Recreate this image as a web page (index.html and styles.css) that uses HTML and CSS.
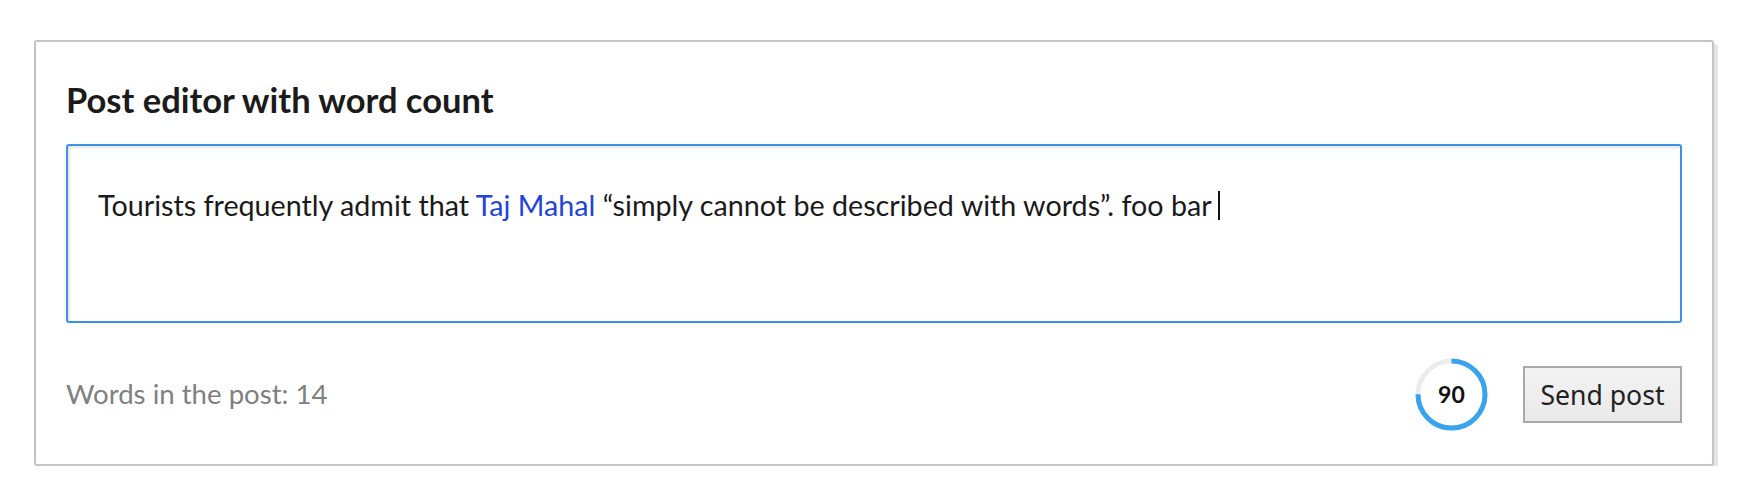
FILE: index.html
```html
<!DOCTYPE html>
<html lang="en">
<head>
<meta charset="utf-8">
<title>Post editor with word count</title>
<link rel="stylesheet" href="styles.css">
</head>
<body>
<div class="card">
  <h3 class="title">Post editor with word count</h3>
  <div class="editor">
    <p class="editor-text">Tourists frequently admit that <a class="link" href="#">Taj Mahal</a> “simply cannot be described with words”. foo bar <span class="caret"></span></p>
  </div>
  <div class="footer">
    <div class="words">Words in the post: 14</div>
    <div class="actions">
      <div class="chars">
        <svg class="ring" width="73" height="73" viewBox="0 0 73 73">
          <circle cx="36.5" cy="36.5" r="33.5" fill="none" stroke="#ececec" stroke-width="5"/>
          <circle cx="36.5" cy="36.5" r="33.5" fill="none" stroke="#38a3ef" stroke-width="5" stroke-dasharray="157.87 210.49" transform="rotate(-90 36.5 36.5)"/>
        </svg>
        <span class="chars-num">90</span>
      </div>
      <button class="send" type="button">Send post</button>
    </div>
  </div>
</div>
</body>
</html>
```

FILE: styles.css
```css
html, body {
  margin: 0;
  padding: 0;
  background: #ffffff;
}

.card {
  box-sizing: border-box;
  width: 1680px;
  margin: 40px 0 0 34px;
  padding: 37.5px 30px 33px 30px;
  border: 2px solid #c4c4c4;
  border-radius: 3px;
  box-shadow: 4px 4px 0 #e4e4e4;
  background: #fff;
}

.title {
  margin: 0 0 24.5px 0;
  font-family: Lato, "Liberation Sans", sans-serif;
  font-weight: 700;
  font-size: 34.5px;
  line-height: 40px;
  color: #1b1b1b;
}

.editor {
  box-sizing: border-box;
  height: 179px;
  padding: 0 30px;
  border: 2px solid #3a92ea;
  border-radius: 3px;
  box-shadow: inset 2px 2px 3px rgba(0, 0, 0, 0.1);
}

.editor-text {
  margin: 42px 0 0 0;
  font-family: Lato, "Liberation Sans", sans-serif;
  font-size: 28.7px;
  line-height: 34px;
  color: #1a1a1a;
}

.link {
  color: #2243de;
  text-decoration: none;
}

.caret {
  display: inline-block;
  width: 2px;
  height: 29px;
  background: #111;
  vertical-align: -4px;
}

.footer {
  display: flex;
  align-items: center;
  justify-content: space-between;
  margin-top: 35px;
}

.words {
  font-family: Lato, "Liberation Sans", sans-serif;
  font-size: 27.6px;
  line-height: 35px;
  color: #808080;
  padding-bottom: 3px;
}

.actions {
  display: flex;
  align-items: center;
  gap: 35px;
}

.chars {
  display: grid;
  width: 73px;
  height: 73px;
  place-items: center;
}

.ring,
.chars-num {
  grid-area: 1 / 1;
}

.ring {
  display: block;
}

.chars-num {
  font-family: Lato, "Liberation Sans", sans-serif;
  font-weight: 700;
  font-size: 23px;
  line-height: 1;
  color: #111;
}

.send {
  box-sizing: border-box;
  height: 57px;
  padding: 0 15.5px;
  border: 2px solid #a9a9a9;
  border-radius: 0;
  background: linear-gradient(#f3f3f3, #e9e9e9);
  font-family: "Noto Sans", "Open Sans", sans-serif;
  font-size: 26.6px;
  color: #222;
  cursor: pointer;
}
```
